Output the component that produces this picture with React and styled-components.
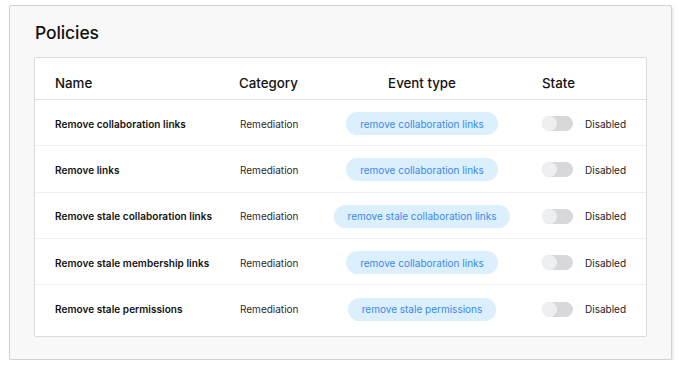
import React from "react"
import styled, { createGlobalStyle } from "styled-components"

const GlobalStyle = createGlobalStyle`
  body {
    margin: 0;
    background: #ffffff;
    font-family: Inter, "Noto Sans", sans-serif;
    color: #111111;
  }
`

const Panel = styled.div`
  box-sizing: border-box;
  margin: 5px 0 0 9px;
  width: 663px;
  height: 355px;
  padding: 0 24px;
  background: #f8f8f8;
  border: 1px solid #d2d2d4;
  border-radius: 2px;
  box-shadow: 1px 2px 3px rgba(0, 0, 0, 0.12);
`

const Title = styled.h1`
  margin: 0;
  padding: 16px 0 0 1px;
  height: 35px;
  font-size: 17.5px;
  font-weight: 500;
  line-height: 22px;
  letter-spacing: -0.1px;
`

const Card = styled.div`
  box-sizing: border-box;
  width: 613px;
  padding-bottom: 5px;
  background: #ffffff;
  border: 1px solid #dcdce0;
  border-radius: 2px;
`

const Row = styled.div`
  box-sizing: border-box;
  display: grid;
  grid-template-columns: 184px 82px 202px 1fr;
  align-items: center;
  padding: ${p => (p.$head ? "8px 0 0 20px" : "2px 0 0 20px")};
  height: ${p => (p.$head ? "42px" : "46.3px")};
  border-bottom: 1px solid ${p => (p.$head ? "#e2e2e6" : "#efeff1")};

  &:last-child {
    border-bottom: none;
  }
`

const HeadCell = styled.div`
  font-size: 13.3px;
  font-weight: 500;
  text-align: ${p => (p.$center ? "center" : "left")};
  padding-left: ${p => p.$indent || 0}px;
`

const NameCell = styled.div`
  font-size: 10px;
  font-weight: 600;
  letter-spacing: 0.05px;
`

const CategoryCell = styled.div`
  font-size: 10px;
  color: #2a2a2a;
  padding-left: 1px;
`

const EventCell = styled.div`
  display: flex;
  justify-content: center;
`

const Pill = styled.span`
  display: inline-flex;
  align-items: center;
  height: 23px;
  padding: 0 14px;
  border-radius: 12px;
  background: #dbeffd;
  color: #3a8ae8;
  font-size: 10px;
  white-space: nowrap;
`

const StateCell = styled.div`
  display: flex;
  align-items: center;
  gap: 12px;
  padding-left: 19px;
  font-size: 10px;
  color: #222222;
`

const Toggle = styled.span`
  position: relative;
  width: 31px;
  height: 15px;
  border-radius: 8px;
  background: #d7d8dc;

  &::after {
    content: "";
    position: absolute;
    left: 0;
    top: 0;
    width: 15px;
    height: 15px;
    border-radius: 50%;
    background: #eeeff1;
  }
`

const policies = [
  { name: "Remove collaboration links", event: "remove collaboration links" },
  { name: "Remove links", event: "remove collaboration links" },
  { name: "Remove stale collaboration links", event: "remove stale collaboration links" },
  { name: "Remove stale membership links", event: "remove collaboration links" },
  { name: "Remove stale permissions", event: "remove stale permissions" },
]

export default function App() {
  return (
    <>
      <GlobalStyle />
      <Panel>
        <Title>Policies</Title>
        <Card>
          <Row $head>
            <HeadCell>Name</HeadCell>
            <HeadCell>Category</HeadCell>
            <HeadCell $center>Event type</HeadCell>
            <HeadCell $indent={19}>State</HeadCell>
          </Row>
          {policies.map(p => (
            <Row key={p.name}>
              <NameCell>{p.name}</NameCell>
              <CategoryCell>Remediation</CategoryCell>
              <EventCell>
                <Pill>{p.event}</Pill>
              </EventCell>
              <StateCell>
                <Toggle />
                Disabled
              </StateCell>
            </Row>
          ))}
        </Card>
      </Panel>
    </>
  )
}
